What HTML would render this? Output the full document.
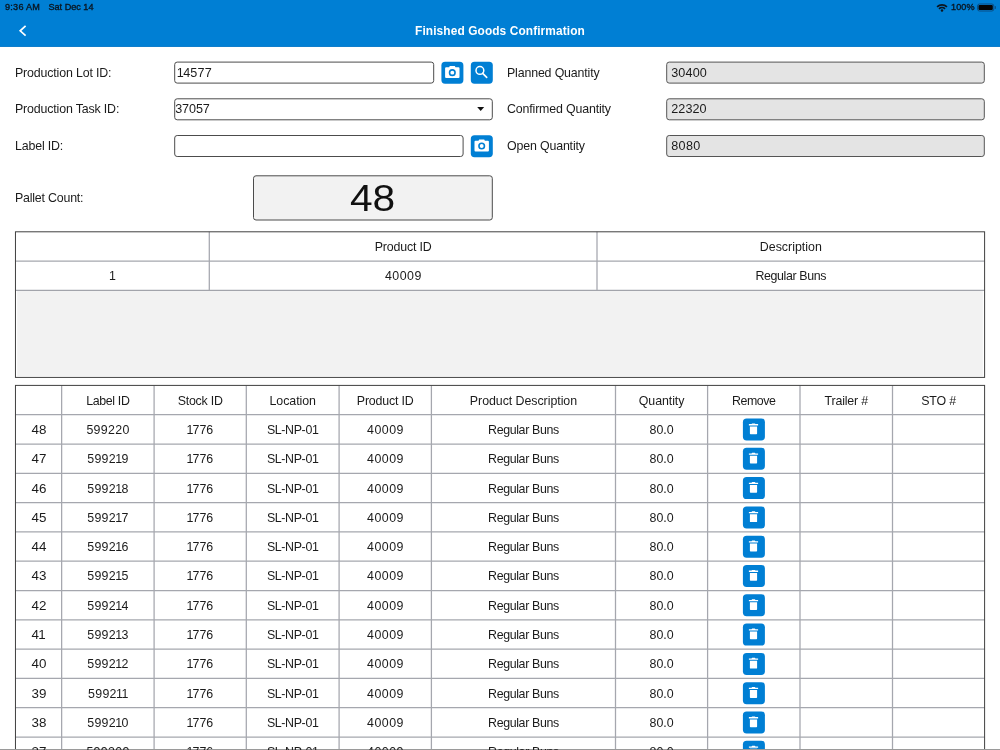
<!DOCTYPE html>
<html><head><meta charset="utf-8"><title>Finished Goods Confirmation</title>
<style>
*{box-sizing:border-box;margin:0;padding:0}
html,body{width:1000px;height:750px;overflow:hidden;background:#fff;font-family:"Liberation Sans",sans-serif;color:#1b1b1b}
#app{position:relative;width:1000px;height:750px;overflow:hidden;background:#fff}
#shapes{position:absolute;left:0;top:0;width:1000px;height:750px}
.abs{position:absolute}
#txt{position:absolute;left:0;top:0;width:1000px;height:750px;will-change:transform;opacity:.999}
.st{position:absolute;top:2.300px;font-size:9.100px;line-height:11px;color:#0b1620;-webkit-text-stroke:.35px #0b1620;white-space:nowrap}
#title{position:absolute;left:0;width:1000px;top:23.300px;text-align:center;color:#fff;font-weight:bold;font-size:11.900px;letter-spacing:.1px;line-height:17px}
.lb{position:absolute;font-size:12.400px;line-height:16px;white-space:nowrap;color:#1b1b1b;letter-spacing:-.16px}
.iv{position:absolute;font-size:12.600px;line-height:20px;white-space:nowrap;color:#1b1b1b}
i{font-style:normal;margin:0 -.8px}
.w{display:inline-block;transform:scaleX(1.08)}
.c{position:absolute;text-align:center;font-size:12.400px;white-space:nowrap;color:#1b1b1b}
</style></head><body><div id="app">
<svg id="shapes" viewBox="0 0 1000 750">
<rect x="0" y="0" width="1000" height="46.900" fill="#007fd4"/><rect x="0" y="46.300" width="1000" height=".6" fill="#0068b4" opacity=".6"/>
<g transform="translate(936.300 3.400) scale(.52)"><path fill="none" stroke="#0b1620" stroke-width="3.300" d="M1.500 6.500A14 14 0 0 1 20.500 6.500M5.200 10.400A8.500 8.500 0 0 1 16.800 10.400"/><circle cx="11" cy="13.600" r="2.400" fill="#0b1620"/></g>
<rect x="977.500" y="4" width="16.300" height="7" rx="2" fill="none" stroke="#0a4f86" stroke-width="1"/>
<rect x="978.500" y="5" width="14.300" height="5" rx="1.100" fill="#050505"/>
<path d="M994.800 6.100h.5a.600.600 0 0 1 .600.600v1.600a.600.600 0 0 1-.600.600h-.5z" fill="#0a4f86"/>
<path fill="none" stroke="#fff" stroke-width="1.700" d="M25.600 25.900L20.200 30.800l5.400 4.900"/>
<rect x="174.70" y="62.10" width="259.00" height="21.00" rx="2.500" fill="#fff" stroke="#4c4c4c" stroke-width="1"/>
<g transform="translate(441.40 61.75)"><rect width="22" height="22" rx="3.700" fill="#007fd4"/><path fill="#fff" d="M4.700 5.500h3l.700-1.200h5l.700 1.200h3a1 1 0 0 1 1 1v8.800a1 1 0 0 1-1 1H4.700a1 1 0 0 1-1-1V6.500a1 1 0 0 1 1-1z"/><circle cx="10.900" cy="10.900" r="2.750" fill="none" stroke="#007fd4" stroke-width="1.600"/></g>
<g transform="translate(470.80 61.75)"><rect width="22" height="22" rx="3.700" fill="#007fd4"/><circle cx="9.100" cy="8.700" r="3.900" fill="none" stroke="#fff" stroke-width="1.500"/><path d="M11.900 11.600L15.900 15.700" stroke="#fff" stroke-width="1.650" stroke-linecap="round"/></g>
<rect x="174.70" y="98.80" width="317.60" height="21.00" rx="2.500" fill="#fff" stroke="#4c4c4c" stroke-width="1"/>
<path d="M477.200 106.900h7l-3.500 4.100z" fill="#111"/>
<rect x="174.70" y="135.50" width="288.40" height="21.00" rx="2.500" fill="#fff" stroke="#4c4c4c" stroke-width="1"/>
<g transform="translate(470.80 135.15)"><rect width="22" height="22" rx="3.700" fill="#007fd4"/><path fill="#fff" d="M4.700 5.500h3l.700-1.200h5l.700 1.200h3a1 1 0 0 1 1 1v8.800a1 1 0 0 1-1 1H4.700a1 1 0 0 1-1-1V6.500a1 1 0 0 1 1-1z"/><circle cx="10.900" cy="10.900" r="2.750" fill="none" stroke="#007fd4" stroke-width="1.600"/></g>
<rect x="666.70" y="62.10" width="317.60" height="21.00" rx="2.500" fill="#e4e4e4" stroke="#555" stroke-width="1"/>
<rect x="666.70" y="98.80" width="317.60" height="21.00" rx="2.500" fill="#e4e4e4" stroke="#555" stroke-width="1"/>
<rect x="666.70" y="135.50" width="317.60" height="21.00" rx="2.500" fill="#e4e4e4" stroke="#555" stroke-width="1"/>
<rect x="253.50" y="175.80" width="238.80" height="44.20" rx="2.500" fill="#f2f2f2" stroke="#4c4c4c" stroke-width="1"/>
<rect x="17.150" y="290.40" width="965.700" height="85.70" fill="#f2f2f2"/>
<path d="M15.46 261.10H984.6M15.46 290.40H984.6M209.3 231.8V290.40M597.0 231.8V290.40" fill="none" stroke="rgba(100,104,116,.58)" stroke-width="1.250"/>
<rect x="15.46" y="231.8" width="969.14" height="145.60" fill="none" stroke="#404040" stroke-width="1"/>
<g transform="translate(742.90 418.50)"><rect width="22" height="22" rx="3.700" fill="#007fd4"/><path fill="#fff" d="M6 5.600h2.600l.700-.700h2.600l.700.700h2.600v1.300H6z"/><path fill="#fff" d="M7 7.900h7.200v7.100a.700.700 0 0 1-.700.700H7.700a.700.700 0 0 1-.700-.700z"/></g>
<g transform="translate(742.90 447.80)"><rect width="22" height="22" rx="3.700" fill="#007fd4"/><path fill="#fff" d="M6 5.600h2.600l.700-.700h2.600l.700.700h2.600v1.300H6z"/><path fill="#fff" d="M7 7.900h7.200v7.100a.700.700 0 0 1-.700.700H7.700a.700.700 0 0 1-.700-.700z"/></g>
<g transform="translate(742.90 477.10)"><rect width="22" height="22" rx="3.700" fill="#007fd4"/><path fill="#fff" d="M6 5.600h2.600l.700-.700h2.600l.700.700h2.600v1.300H6z"/><path fill="#fff" d="M7 7.900h7.200v7.100a.700.700 0 0 1-.700.700H7.700a.700.700 0 0 1-.700-.700z"/></g>
<g transform="translate(742.90 506.40)"><rect width="22" height="22" rx="3.700" fill="#007fd4"/><path fill="#fff" d="M6 5.600h2.600l.700-.700h2.600l.700.700h2.600v1.300H6z"/><path fill="#fff" d="M7 7.900h7.200v7.100a.700.700 0 0 1-.700.700H7.700a.700.700 0 0 1-.700-.700z"/></g>
<g transform="translate(742.90 535.70)"><rect width="22" height="22" rx="3.700" fill="#007fd4"/><path fill="#fff" d="M6 5.600h2.600l.700-.700h2.600l.700.700h2.600v1.300H6z"/><path fill="#fff" d="M7 7.900h7.200v7.100a.700.700 0 0 1-.700.700H7.700a.700.700 0 0 1-.700-.700z"/></g>
<g transform="translate(742.90 565.00)"><rect width="22" height="22" rx="3.700" fill="#007fd4"/><path fill="#fff" d="M6 5.600h2.600l.700-.700h2.600l.700.700h2.600v1.300H6z"/><path fill="#fff" d="M7 7.900h7.200v7.100a.700.700 0 0 1-.700.700H7.700a.700.700 0 0 1-.700-.700z"/></g>
<g transform="translate(742.90 594.30)"><rect width="22" height="22" rx="3.700" fill="#007fd4"/><path fill="#fff" d="M6 5.600h2.600l.700-.700h2.600l.700.700h2.600v1.300H6z"/><path fill="#fff" d="M7 7.900h7.200v7.100a.700.700 0 0 1-.700.700H7.700a.700.700 0 0 1-.700-.700z"/></g>
<g transform="translate(742.90 623.60)"><rect width="22" height="22" rx="3.700" fill="#007fd4"/><path fill="#fff" d="M6 5.600h2.600l.700-.700h2.600l.700.700h2.600v1.300H6z"/><path fill="#fff" d="M7 7.900h7.200v7.100a.700.700 0 0 1-.700.700H7.700a.700.700 0 0 1-.700-.700z"/></g>
<g transform="translate(742.90 652.90)"><rect width="22" height="22" rx="3.700" fill="#007fd4"/><path fill="#fff" d="M6 5.600h2.600l.700-.700h2.600l.700.700h2.600v1.300H6z"/><path fill="#fff" d="M7 7.900h7.200v7.100a.700.700 0 0 1-.700.700H7.700a.700.700 0 0 1-.700-.700z"/></g>
<g transform="translate(742.90 682.20)"><rect width="22" height="22" rx="3.700" fill="#007fd4"/><path fill="#fff" d="M6 5.600h2.600l.700-.700h2.600l.700.700h2.600v1.300H6z"/><path fill="#fff" d="M7 7.900h7.200v7.100a.700.700 0 0 1-.700.700H7.700a.700.700 0 0 1-.700-.700z"/></g>
<g transform="translate(742.90 711.50)"><rect width="22" height="22" rx="3.700" fill="#007fd4"/><path fill="#fff" d="M6 5.600h2.600l.700-.700h2.600l.700.700h2.600v1.300H6z"/><path fill="#fff" d="M7 7.900h7.200v7.100a.700.700 0 0 1-.700.700H7.700a.700.700 0 0 1-.700-.700z"/></g>
<g transform="translate(742.90 740.80)"><rect width="22" height="22" rx="3.700" fill="#007fd4"/><path fill="#fff" d="M6 5.600h2.600l.700-.700h2.600l.700.700h2.600v1.300H6z"/><path fill="#fff" d="M7 7.900h7.200v7.100a.700.700 0 0 1-.700.700H7.700a.700.700 0 0 1-.700-.700z"/></g>
<path d="M15.46 414.70H984.6M15.46 444.00H984.6M15.46 473.30H984.6M15.46 502.60H984.6M15.46 531.90H984.6M15.46 561.20H984.6M15.46 590.50H984.6M15.46 619.80H984.6M15.46 649.10H984.6M15.46 678.40H984.6M15.46 707.70H984.6M15.46 737.00H984.6M61.64 385.4V760M154.1 385.4V760M246.3 385.4V760M339.1 385.4V760M431.4 385.4V760M615.5 385.4V760M707.6 385.4V760M800.0 385.4V760M892.5 385.4V760" fill="none" stroke="rgba(100,104,116,.58)" stroke-width="1.250"/>
<rect x="15.46" y="385.4" width="969.14" height="400" fill="none" stroke="#404040" stroke-width="1"/>
<rect x="0" y="749" width="1000" height="1" fill="#9a9a9a"/>
</svg>
<div id="txt">
<div class="st" style="left:5px;letter-spacing:.25px">9:36 AM</div>
<div class="st" style="left:48.500px">Sat Dec 14</div>
<div class="st" style="left:951px;letter-spacing:.1px">100%</div>
<div id="title">Finished Goods Confirmation</div>
<div class="lb" style="left:15px;top:64.5px">Production Lot ID:</div>
<div class="iv" style="left:177.500px;top:62.6px;letter-spacing:.2px"><i>1</i>4577</div>
<div class="lb" style="left:15px;top:101.2px">Production Task ID:</div>
<div class="iv" style="left:175.200px;top:99.3px;letter-spacing:-.1px">37057</div>
<div class="lb" style="left:15px;top:137.9px">Label ID:</div>
<div class="lb" style="left:507px;top:64.5px">Planned Quantity</div>
<div class="iv" style="left:671.200px;top:62.6px;letter-spacing:.15px">30400</div>
<div class="lb" style="left:507px;top:101.2px">Confirmed Quantity</div>
<div class="iv" style="left:671.200px;top:99.3px;letter-spacing:.1px">22320</div>
<div class="lb" style="left:507px;top:137.9px">Open Quantity</div>
<div class="iv" style="left:671.200px;top:136.0px;letter-spacing:.35px">8080</div>
<div class="lb" style="left:15px;top:189.700px;letter-spacing:-.2px">Pallet Count:</div>
<div class="abs" style="left:253px;top:175.300px;width:239.800px;height:45.200px;text-align:center;font-size:37px;line-height:47px;color:#111"><span style="display:inline-block;transform:scaleX(1.1)">48</span></div>
<div class="c" style="left:209.30px;width:387.70px;top:233.00px;height:29.30px;line-height:29.30px;letter-spacing:-0.17px;padding-left:-0.17px">Product ID</div>
<div class="c" style="left:597.00px;width:387.60px;top:233.00px;height:29.30px;line-height:29.30px">Description</div>
<div class="c" style="left:15.46px;width:193.84px;top:262.30px;height:29.30px;line-height:29.30px">1</div>
<div class="c" style="left:209.30px;width:387.70px;top:262.30px;height:29.30px;line-height:29.30px;letter-spacing:0.5px;padding-left:0.50px">40009</div>
<div class="c" style="left:597.00px;width:387.60px;top:262.30px;height:29.30px;line-height:29.30px;letter-spacing:-0.36px;padding-left:-0.36px">Regular Buns</div>
<div class="c" style="left:61.64px;width:92.46px;top:386.60px;height:29.30px;line-height:29.30px;letter-spacing:-0.36px;padding-left:-0.36px">Label ID</div>
<div class="c" style="left:154.10px;width:92.20px;top:386.60px;height:29.30px;line-height:29.30px;letter-spacing:-0.25px;padding-left:-0.25px">Stock ID</div>
<div class="c" style="left:246.30px;width:92.80px;top:386.60px;height:29.30px;line-height:29.30px;letter-spacing:-0.07px;padding-left:-0.07px">Location</div>
<div class="c" style="left:339.10px;width:92.30px;top:386.60px;height:29.30px;line-height:29.30px;letter-spacing:-0.17px;padding-left:-0.17px">Product ID</div>
<div class="c" style="left:431.40px;width:184.10px;top:386.60px;height:29.30px;line-height:29.30px;letter-spacing:-0.05px;padding-left:-0.05px">Product Description</div>
<div class="c" style="left:615.50px;width:92.10px;top:386.60px;height:29.30px;line-height:29.30px;letter-spacing:-0.07px;padding-left:-0.07px">Quantity</div>
<div class="c" style="left:707.60px;width:92.40px;top:386.60px;height:29.30px;line-height:29.30px;letter-spacing:-0.42px;padding-left:-0.42px">Remove</div>
<div class="c" style="left:800.00px;width:92.50px;top:386.60px;height:29.30px;line-height:29.30px;letter-spacing:-0.19px;padding-left:-0.19px">Trailer #</div>
<div class="c" style="left:892.50px;width:92.10px;top:386.60px;height:29.30px;line-height:29.30px;letter-spacing:-0.2px;padding-left:-0.20px">STO #</div>
<div class="c" style="left:15.46px;width:46.18px;top:415.90px;height:29.30px;line-height:29.30px;letter-spacing:0.2px;padding-left:0.20px"><span class="w">48</span></div>
<div class="c" style="left:61.64px;width:92.46px;top:415.90px;height:29.30px;line-height:29.30px;letter-spacing:0.3px;padding-left:0.30px">599220</div>
<div class="c" style="left:154.10px;width:92.20px;top:415.90px;height:29.30px;line-height:29.30px"><i>1</i>776</div>
<div class="c" style="left:246.30px;width:92.80px;top:415.90px;height:29.30px;line-height:29.30px;letter-spacing:-0.36px;padding-left:-0.36px">SL-NP-01</div>
<div class="c" style="left:339.10px;width:92.30px;top:415.90px;height:29.30px;line-height:29.30px;letter-spacing:0.5px;padding-left:0.50px">40009</div>
<div class="c" style="left:431.40px;width:184.10px;top:415.90px;height:29.30px;line-height:29.30px;letter-spacing:-0.36px;padding-left:-0.36px">Regular Buns</div>
<div class="c" style="left:615.50px;width:92.10px;top:415.90px;height:29.30px;line-height:29.30px">80.0</div>
<div class="c" style="left:15.46px;width:46.18px;top:445.20px;height:29.30px;line-height:29.30px;letter-spacing:0.2px;padding-left:0.20px"><span class="w">47</span></div>
<div class="c" style="left:61.64px;width:92.46px;top:445.20px;height:29.30px;line-height:29.30px;letter-spacing:0.3px;padding-left:0.30px">5992<i>1</i>9</div>
<div class="c" style="left:154.10px;width:92.20px;top:445.20px;height:29.30px;line-height:29.30px"><i>1</i>776</div>
<div class="c" style="left:246.30px;width:92.80px;top:445.20px;height:29.30px;line-height:29.30px;letter-spacing:-0.36px;padding-left:-0.36px">SL-NP-01</div>
<div class="c" style="left:339.10px;width:92.30px;top:445.20px;height:29.30px;line-height:29.30px;letter-spacing:0.5px;padding-left:0.50px">40009</div>
<div class="c" style="left:431.40px;width:184.10px;top:445.20px;height:29.30px;line-height:29.30px;letter-spacing:-0.36px;padding-left:-0.36px">Regular Buns</div>
<div class="c" style="left:615.50px;width:92.10px;top:445.20px;height:29.30px;line-height:29.30px">80.0</div>
<div class="c" style="left:15.46px;width:46.18px;top:474.50px;height:29.30px;line-height:29.30px;letter-spacing:0.2px;padding-left:0.20px"><span class="w">46</span></div>
<div class="c" style="left:61.64px;width:92.46px;top:474.50px;height:29.30px;line-height:29.30px;letter-spacing:0.3px;padding-left:0.30px">5992<i>1</i>8</div>
<div class="c" style="left:154.10px;width:92.20px;top:474.50px;height:29.30px;line-height:29.30px"><i>1</i>776</div>
<div class="c" style="left:246.30px;width:92.80px;top:474.50px;height:29.30px;line-height:29.30px;letter-spacing:-0.36px;padding-left:-0.36px">SL-NP-01</div>
<div class="c" style="left:339.10px;width:92.30px;top:474.50px;height:29.30px;line-height:29.30px;letter-spacing:0.5px;padding-left:0.50px">40009</div>
<div class="c" style="left:431.40px;width:184.10px;top:474.50px;height:29.30px;line-height:29.30px;letter-spacing:-0.36px;padding-left:-0.36px">Regular Buns</div>
<div class="c" style="left:615.50px;width:92.10px;top:474.50px;height:29.30px;line-height:29.30px">80.0</div>
<div class="c" style="left:15.46px;width:46.18px;top:503.80px;height:29.30px;line-height:29.30px;letter-spacing:0.2px;padding-left:0.20px"><span class="w">45</span></div>
<div class="c" style="left:61.64px;width:92.46px;top:503.80px;height:29.30px;line-height:29.30px;letter-spacing:0.3px;padding-left:0.30px">5992<i>1</i>7</div>
<div class="c" style="left:154.10px;width:92.20px;top:503.80px;height:29.30px;line-height:29.30px"><i>1</i>776</div>
<div class="c" style="left:246.30px;width:92.80px;top:503.80px;height:29.30px;line-height:29.30px;letter-spacing:-0.36px;padding-left:-0.36px">SL-NP-01</div>
<div class="c" style="left:339.10px;width:92.30px;top:503.80px;height:29.30px;line-height:29.30px;letter-spacing:0.5px;padding-left:0.50px">40009</div>
<div class="c" style="left:431.40px;width:184.10px;top:503.80px;height:29.30px;line-height:29.30px;letter-spacing:-0.36px;padding-left:-0.36px">Regular Buns</div>
<div class="c" style="left:615.50px;width:92.10px;top:503.80px;height:29.30px;line-height:29.30px">80.0</div>
<div class="c" style="left:15.46px;width:46.18px;top:533.10px;height:29.30px;line-height:29.30px;letter-spacing:0.2px;padding-left:0.20px"><span class="w">44</span></div>
<div class="c" style="left:61.64px;width:92.46px;top:533.10px;height:29.30px;line-height:29.30px;letter-spacing:0.3px;padding-left:0.30px">5992<i>1</i>6</div>
<div class="c" style="left:154.10px;width:92.20px;top:533.10px;height:29.30px;line-height:29.30px"><i>1</i>776</div>
<div class="c" style="left:246.30px;width:92.80px;top:533.10px;height:29.30px;line-height:29.30px;letter-spacing:-0.36px;padding-left:-0.36px">SL-NP-01</div>
<div class="c" style="left:339.10px;width:92.30px;top:533.10px;height:29.30px;line-height:29.30px;letter-spacing:0.5px;padding-left:0.50px">40009</div>
<div class="c" style="left:431.40px;width:184.10px;top:533.10px;height:29.30px;line-height:29.30px;letter-spacing:-0.36px;padding-left:-0.36px">Regular Buns</div>
<div class="c" style="left:615.50px;width:92.10px;top:533.10px;height:29.30px;line-height:29.30px">80.0</div>
<div class="c" style="left:15.46px;width:46.18px;top:562.40px;height:29.30px;line-height:29.30px;letter-spacing:0.2px;padding-left:0.20px"><span class="w">43</span></div>
<div class="c" style="left:61.64px;width:92.46px;top:562.40px;height:29.30px;line-height:29.30px;letter-spacing:0.3px;padding-left:0.30px">5992<i>1</i>5</div>
<div class="c" style="left:154.10px;width:92.20px;top:562.40px;height:29.30px;line-height:29.30px"><i>1</i>776</div>
<div class="c" style="left:246.30px;width:92.80px;top:562.40px;height:29.30px;line-height:29.30px;letter-spacing:-0.36px;padding-left:-0.36px">SL-NP-01</div>
<div class="c" style="left:339.10px;width:92.30px;top:562.40px;height:29.30px;line-height:29.30px;letter-spacing:0.5px;padding-left:0.50px">40009</div>
<div class="c" style="left:431.40px;width:184.10px;top:562.40px;height:29.30px;line-height:29.30px;letter-spacing:-0.36px;padding-left:-0.36px">Regular Buns</div>
<div class="c" style="left:615.50px;width:92.10px;top:562.40px;height:29.30px;line-height:29.30px">80.0</div>
<div class="c" style="left:15.46px;width:46.18px;top:591.70px;height:29.30px;line-height:29.30px;letter-spacing:0.2px;padding-left:0.20px"><span class="w">42</span></div>
<div class="c" style="left:61.64px;width:92.46px;top:591.70px;height:29.30px;line-height:29.30px;letter-spacing:0.3px;padding-left:0.30px">5992<i>1</i>4</div>
<div class="c" style="left:154.10px;width:92.20px;top:591.70px;height:29.30px;line-height:29.30px"><i>1</i>776</div>
<div class="c" style="left:246.30px;width:92.80px;top:591.70px;height:29.30px;line-height:29.30px;letter-spacing:-0.36px;padding-left:-0.36px">SL-NP-01</div>
<div class="c" style="left:339.10px;width:92.30px;top:591.70px;height:29.30px;line-height:29.30px;letter-spacing:0.5px;padding-left:0.50px">40009</div>
<div class="c" style="left:431.40px;width:184.10px;top:591.70px;height:29.30px;line-height:29.30px;letter-spacing:-0.36px;padding-left:-0.36px">Regular Buns</div>
<div class="c" style="left:615.50px;width:92.10px;top:591.70px;height:29.30px;line-height:29.30px">80.0</div>
<div class="c" style="left:15.46px;width:46.18px;top:621.00px;height:29.30px;line-height:29.30px;letter-spacing:0.2px;padding-left:0.20px"><span class="w">4<i>1</i></span></div>
<div class="c" style="left:61.64px;width:92.46px;top:621.00px;height:29.30px;line-height:29.30px;letter-spacing:0.3px;padding-left:0.30px">5992<i>1</i>3</div>
<div class="c" style="left:154.10px;width:92.20px;top:621.00px;height:29.30px;line-height:29.30px"><i>1</i>776</div>
<div class="c" style="left:246.30px;width:92.80px;top:621.00px;height:29.30px;line-height:29.30px;letter-spacing:-0.36px;padding-left:-0.36px">SL-NP-01</div>
<div class="c" style="left:339.10px;width:92.30px;top:621.00px;height:29.30px;line-height:29.30px;letter-spacing:0.5px;padding-left:0.50px">40009</div>
<div class="c" style="left:431.40px;width:184.10px;top:621.00px;height:29.30px;line-height:29.30px;letter-spacing:-0.36px;padding-left:-0.36px">Regular Buns</div>
<div class="c" style="left:615.50px;width:92.10px;top:621.00px;height:29.30px;line-height:29.30px">80.0</div>
<div class="c" style="left:15.46px;width:46.18px;top:650.30px;height:29.30px;line-height:29.30px;letter-spacing:0.2px;padding-left:0.20px"><span class="w">40</span></div>
<div class="c" style="left:61.64px;width:92.46px;top:650.30px;height:29.30px;line-height:29.30px;letter-spacing:0.3px;padding-left:0.30px">5992<i>1</i>2</div>
<div class="c" style="left:154.10px;width:92.20px;top:650.30px;height:29.30px;line-height:29.30px"><i>1</i>776</div>
<div class="c" style="left:246.30px;width:92.80px;top:650.30px;height:29.30px;line-height:29.30px;letter-spacing:-0.36px;padding-left:-0.36px">SL-NP-01</div>
<div class="c" style="left:339.10px;width:92.30px;top:650.30px;height:29.30px;line-height:29.30px;letter-spacing:0.5px;padding-left:0.50px">40009</div>
<div class="c" style="left:431.40px;width:184.10px;top:650.30px;height:29.30px;line-height:29.30px;letter-spacing:-0.36px;padding-left:-0.36px">Regular Buns</div>
<div class="c" style="left:615.50px;width:92.10px;top:650.30px;height:29.30px;line-height:29.30px">80.0</div>
<div class="c" style="left:15.46px;width:46.18px;top:679.60px;height:29.30px;line-height:29.30px;letter-spacing:0.2px;padding-left:0.20px"><span class="w">39</span></div>
<div class="c" style="left:61.64px;width:92.46px;top:679.60px;height:29.30px;line-height:29.30px;letter-spacing:0.3px;padding-left:0.30px">5992<i>1</i><i>1</i></div>
<div class="c" style="left:154.10px;width:92.20px;top:679.60px;height:29.30px;line-height:29.30px"><i>1</i>776</div>
<div class="c" style="left:246.30px;width:92.80px;top:679.60px;height:29.30px;line-height:29.30px;letter-spacing:-0.36px;padding-left:-0.36px">SL-NP-01</div>
<div class="c" style="left:339.10px;width:92.30px;top:679.60px;height:29.30px;line-height:29.30px;letter-spacing:0.5px;padding-left:0.50px">40009</div>
<div class="c" style="left:431.40px;width:184.10px;top:679.60px;height:29.30px;line-height:29.30px;letter-spacing:-0.36px;padding-left:-0.36px">Regular Buns</div>
<div class="c" style="left:615.50px;width:92.10px;top:679.60px;height:29.30px;line-height:29.30px">80.0</div>
<div class="c" style="left:15.46px;width:46.18px;top:708.90px;height:29.30px;line-height:29.30px;letter-spacing:0.2px;padding-left:0.20px"><span class="w">38</span></div>
<div class="c" style="left:61.64px;width:92.46px;top:708.90px;height:29.30px;line-height:29.30px;letter-spacing:0.3px;padding-left:0.30px">5992<i>1</i>0</div>
<div class="c" style="left:154.10px;width:92.20px;top:708.90px;height:29.30px;line-height:29.30px"><i>1</i>776</div>
<div class="c" style="left:246.30px;width:92.80px;top:708.90px;height:29.30px;line-height:29.30px;letter-spacing:-0.36px;padding-left:-0.36px">SL-NP-01</div>
<div class="c" style="left:339.10px;width:92.30px;top:708.90px;height:29.30px;line-height:29.30px;letter-spacing:0.5px;padding-left:0.50px">40009</div>
<div class="c" style="left:431.40px;width:184.10px;top:708.90px;height:29.30px;line-height:29.30px;letter-spacing:-0.36px;padding-left:-0.36px">Regular Buns</div>
<div class="c" style="left:615.50px;width:92.10px;top:708.90px;height:29.30px;line-height:29.30px">80.0</div>
<div class="c" style="left:15.46px;width:46.18px;top:738.20px;height:29.30px;line-height:29.30px;letter-spacing:0.2px;padding-left:0.20px"><span class="w">37</span></div>
<div class="c" style="left:61.64px;width:92.46px;top:738.20px;height:29.30px;line-height:29.30px;letter-spacing:0.3px;padding-left:0.30px">599209</div>
<div class="c" style="left:154.10px;width:92.20px;top:738.20px;height:29.30px;line-height:29.30px"><i>1</i>776</div>
<div class="c" style="left:246.30px;width:92.80px;top:738.20px;height:29.30px;line-height:29.30px;letter-spacing:-0.36px;padding-left:-0.36px">SL-NP-01</div>
<div class="c" style="left:339.10px;width:92.30px;top:738.20px;height:29.30px;line-height:29.30px;letter-spacing:0.5px;padding-left:0.50px">40009</div>
<div class="c" style="left:431.40px;width:184.10px;top:738.20px;height:29.30px;line-height:29.30px;letter-spacing:-0.36px;padding-left:-0.36px">Regular Buns</div>
<div class="c" style="left:615.50px;width:92.10px;top:738.20px;height:29.30px;line-height:29.30px">80.0</div>
</div>
</div></body></html>
